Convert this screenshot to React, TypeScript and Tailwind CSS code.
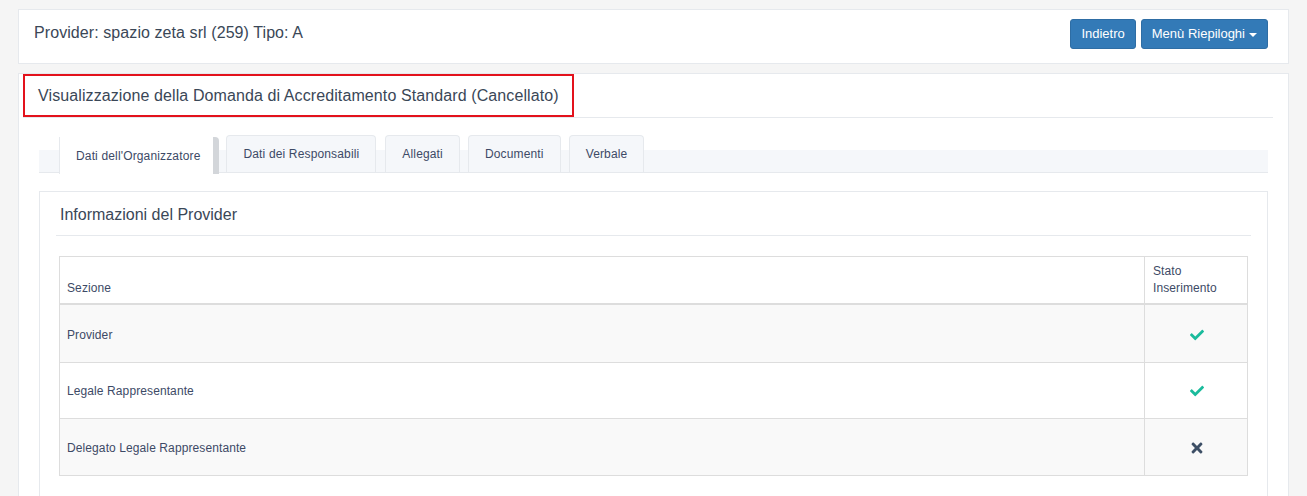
import React from "react";
import { FaCheck, FaTimes } from "react-icons/fa";

const rows = [
  { name: "Provider", ok: true, h: "h-[58px] border-b border-[#ddd] bg-[#f9f9f9]", p: "pt-[3px]" },
  { name: "Legale Rappresentante", ok: true, h: "h-[56px] border-b border-[#ddd] bg-white", p: "" },
  { name: "Delegato Legale Rappresentante", ok: false, h: "h-[56px] bg-[#f9f9f9]", p: "pt-[1px]" },
];

const tabs = ["Dati dei Responsabili", "Allegati", "Documenti", "Verbale"];

export default function App() {
  return (
    <div
      className="min-h-screen bg-[#f5f5f5] px-[18px] pt-[9px] pb-[40px] text-[#3a4757]"
      style={{ fontFamily: '"Liberation Sans", Arial, sans-serif' }}
    >
      {/* Top panel */}
      <div className="flex h-[55px] items-start justify-between border border-[#e6e9ed] bg-white pl-[15px] pr-[20px]">
        <div className="mt-[12px] text-[16px] leading-[22px] tracking-[0.08px]">Provider: spazio zeta srl (259) Tipo: A</div>
        <div className="mt-[9px] flex gap-[5px]">
          <button className="h-[30px] rounded-[3px] border border-[#2e6da4] bg-[#337ab7] px-[10px] text-[13px] leading-[18px] text-white">
            Indietro
          </button>
          <button className="flex h-[30px] items-center rounded-[3px] border border-[#2e6da4] bg-[#337ab7] px-[10px] text-[13px] leading-[18px] text-white">
            Menù Riepiloghi
            <span className="ml-[4px] mt-[1px] inline-block h-0 w-0 border-x-[4px] border-t-[4px] border-x-transparent border-t-white" />
          </button>
        </div>
      </div>

      {/* Main panel */}
      <div className="mt-[9px] border border-[#e6e9ed] bg-white px-[20px] pb-[40px]">
        <div className="ml-[-16px] mr-[-5px] border-b border-[#e6e9ed]">
          <div className="flex h-[43px] w-[551px] items-center border-2 border-[#e3121c] pl-[13px] text-[16px] tracking-[0.1px]">
            Visualizzazione della Domanda di Accreditamento Standard (Cancellato)
          </div>
        </div>

        {/* Tabs */}
        <div className="mt-[32px] flex h-[23px] items-start border-b border-[#e6e9ed] bg-[#f5f7fa] pl-[20px] text-[12px] tracking-[0.15px] text-[#3d4a66]">
          <div className="mt-[-13px] flex h-[37px] items-center rounded-tr-[4px] border-l border-r-[6px] border-l-[#e6e9ed] border-r-[#d3d6da] bg-white pl-[16px] pr-[13px] pt-[1px]">
            Dati dell'Organizzatore
          </div>
          {tabs.map((t, i) => (
            <div
              key={t}
              className={`mt-[-15px] flex h-[37px] items-center rounded-t-[4px] border border-b-0 border-[#e6e9ed] bg-[#f5f7fa] px-[16px] ${
                i === 0 ? "ml-[7px]" : i === 1 ? "ml-[9px]" : "ml-[8px]"
              }`}
            >
              {t}
            </div>
          ))}
        </div>

        {/* Inner panel */}
        <div className="mt-[18px] border border-[#e6e9ed] bg-white px-[16px] pb-[40px]">
          <div className="h-[44px] border-b border-[#e6e9ed] px-[4px] pt-[12px] text-[16px] leading-[22px]">
            Informazioni del Provider
          </div>

          <div className="mx-[3px] mt-[20px] border border-[#ddd] text-[12px] tracking-[0.1px] text-[#3d4a66]">
            <div className="grid h-[48px] grid-cols-[1fr_103px] border-b-2 border-[#ddd] leading-[17px]">
              <div className="flex items-end px-[7px] pb-[6px]">Sezione</div>
              <div className="flex items-end border-l border-[#ddd] px-[8px] pb-[6px]">
                Stato
                <br />
                Inserimento
              </div>
            </div>
            {rows.map((r) => (
              <div key={r.name} className={`grid grid-cols-[1fr_103px] ${r.h}`}>
                <div className={`flex items-center px-[7px] ${r.p}`}>{r.name}</div>
                <div className={`flex items-center justify-center border-l border-[#ddd] pl-[1px] ${r.p}`}>
                  {r.ok ? (
                    <FaCheck className="text-[#1abb9c]" size={14} />
                  ) : (
                    <FaTimes className="text-[#3d4f66]" size={16} />
                  )}
                </div>
              </div>
            ))}
          </div>
        </div>
      </div>
    </div>
  );
}
